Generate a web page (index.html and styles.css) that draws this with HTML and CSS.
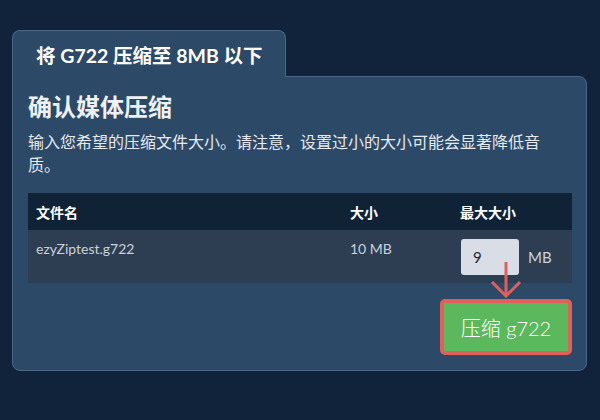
FILE: index.html
```html
<!DOCTYPE html>
<html lang="zh">
<head>
<meta charset="utf-8">
<link rel="stylesheet" href="styles.css">
</head>
<body>
<div class="wrap">
  <div class="tab">将 G722 压缩至 8MB 以下</div>
  <div class="panel">
    <h2 class="title">确认媒体压缩</h2>
    <p class="desc">输入您希望的压缩文件大小。请注意，设置过小的大小可能会显著降低音质。</p>
    <div class="table">
      <div class="thead">
        <div class="cell">文件名</div>
        <div class="cell">大小</div>
        <div class="cell">最大大小</div>
      </div>
      <div class="trow">
        <div class="cell">ezyZiptest.g722</div>
        <div class="cell">10 MB</div>
        <div class="cell size-cell">
          <input class="size-input" type="text" value="9">
          <span class="unit">MB</span>
        </div>
      </div>
    </div>
    <div class="actions">
      <button class="compress-btn">压缩 g722</button>
    </div>
    <svg class="arrow" width="32" height="40" viewBox="0 0 32 40">
      <line x1="16" y1="4" x2="16" y2="37" stroke="#e0605b" stroke-width="3"/>
      <polyline points="2,24 16,38 30,24" fill="none" stroke="#e0605b" stroke-width="3" stroke-linejoin="miter"/>
    </svg>
  </div>
</div>
</body>
</html>
```

FILE: styles.css
```css
html, body {
  margin: 0;
  background: #11233a;
}
body {
  font-family: Lato, "Noto Sans CJK SC", sans-serif;
  width: 600px;
  height: 420px;
  overflow: hidden;
}
.wrap {
  margin: 30px 0 0 12px;
  width: 575px;
  display: flex;
  flex-direction: column;
  align-items: flex-start;
}
.tab {
  display: flex;
  align-items: center;
  height: 46px;
  padding: 0 22px 0 23px;
  background: #2c4968;
  border: 1px solid #4a678a;
  border-bottom: 0;
  border-radius: 8px 8px 0 0;
  color: #ffffff;
  font-weight: 700;
  font-size: 19.5px;
  position: relative;
  z-index: 1;
  margin-bottom: -1px;
}
.panel {
  align-self: stretch;
  position: relative;
  background: #2c4968;
  border: 1px solid #4a678a;
  border-radius: 0 8px 8px 8px;
  padding: 15px 14px 15px 15px;
}
.title {
  margin: 0;
  font-size: 24px;
  line-height: 30px;
  font-weight: 700;
  color: #eef1f5;
}
.desc {
  margin: 8px 0 0;
  font-size: 16px;
  line-height: 23px;
  max-width: 525px;
  color: #e6eaef;
}
.table {
  margin-top: 17px;
}
.thead, .trow {
  display: grid;
  grid-template-columns: 314px 110px 1fr;
}
.thead {
  height: 37px;
  background: #0f2236;
  align-items: center;
  color: #ffffff;
  font-weight: 700;
  font-size: 14px;
}
.trow {
  height: 53px;
  box-sizing: border-box;
  padding-top: 9px;
  background: #2e3e52;
  align-items: start;
  color: #c9d1db;
  font-size: 14px;
  line-height: 20px;
}
.cell {
  padding-left: 8px;
}
.size-cell {
  padding-left: 9px;
  display: flex;
  align-items: center;
  gap: 9px;
}
.size-input {
  width: 58px;
  height: 36px;
  box-sizing: border-box;
  border: 0;
  border-radius: 3px;
  background: #d9dee6;
  padding: 0 0 0 12px;
  font-family: Lato, sans-serif;
  font-size: 15px;
  color: #1e2a38;
  outline: none;
}
.unit {
  font-size: 15px;
  color: #c9d1db;
}
.actions {
  display: flex;
  justify-content: flex-end;
  margin-top: 16px;
}
.compress-btn {
  width: 132px;
  height: 56px;
  box-sizing: border-box;
  border: 4px solid #e0605b;
  border-radius: 5px;
  background: #5cb85c;
  color: #ffffff;
  font-family: Lato, "Noto Sans CJK SC", sans-serif;
  font-size: 20px;
  font-weight: 300;
  padding: 0;
}
.arrow {
  position: absolute;
  left: 477px;
  top: 181px;
}
```
